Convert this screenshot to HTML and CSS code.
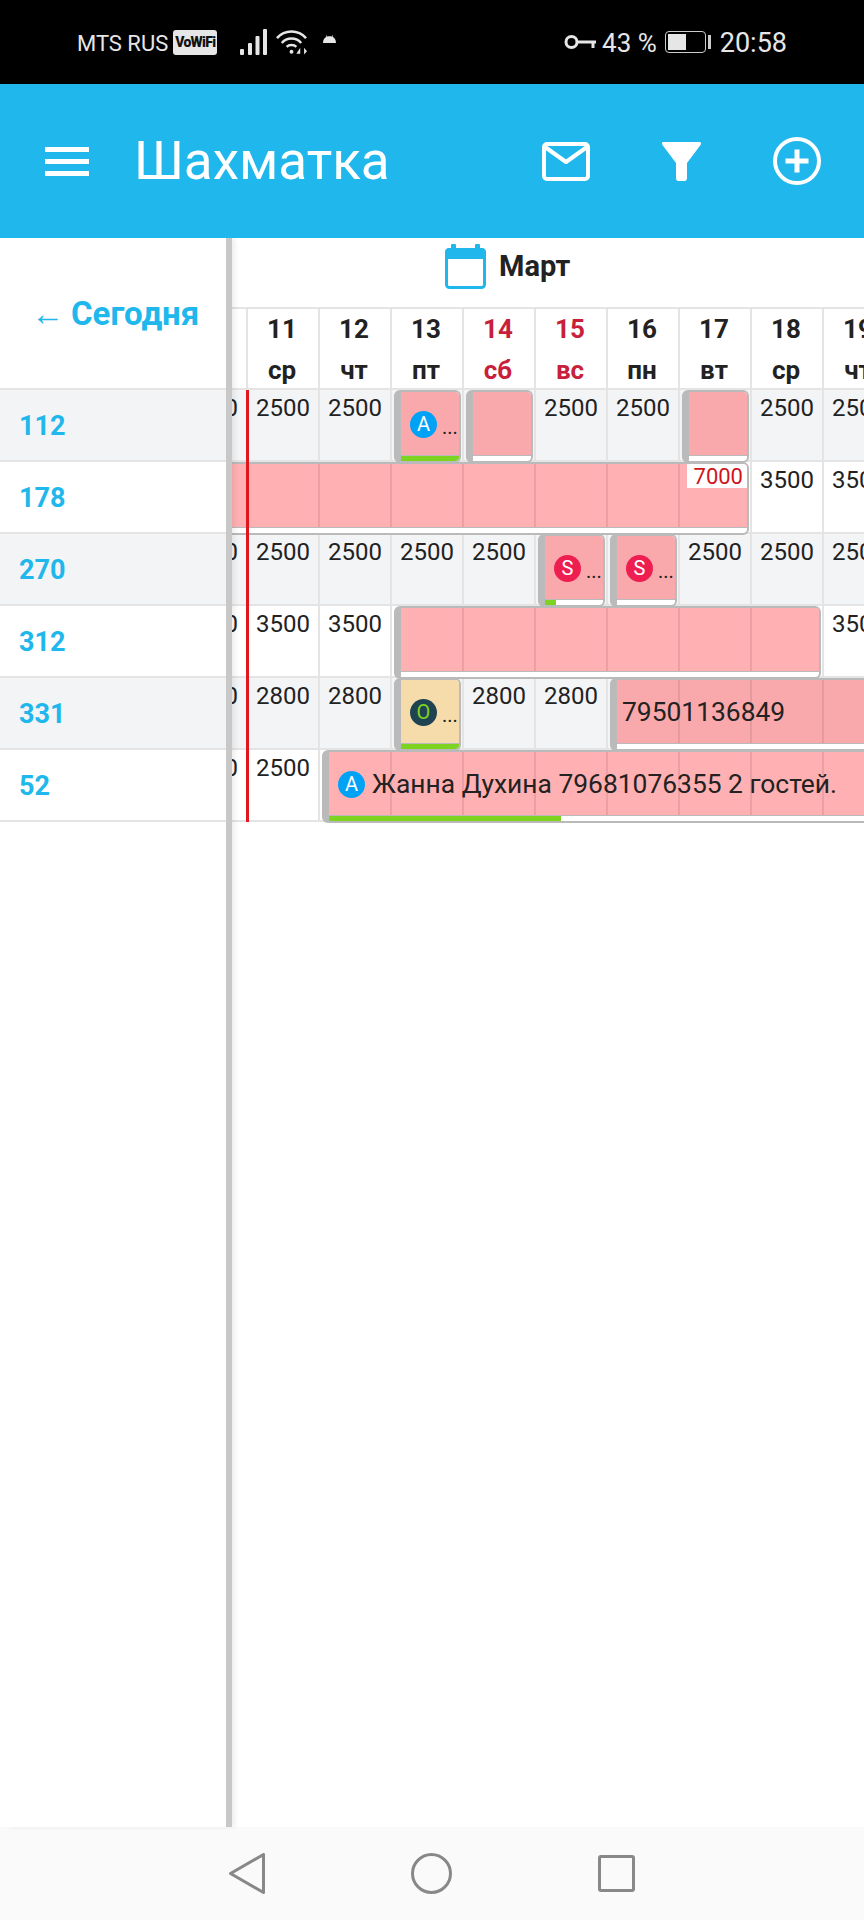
FILE: index.html
```html
<!DOCTYPE html>
<html lang="ru">
<head>
    <meta charset="UTF-8">
    <meta name="viewport" content="width=device-width, initial-scale=1.0">
    <title>Шахматка</title>
    <link rel="stylesheet" href="styles.css">
</head>
<body>
    <!-- Status bar -->
    <div class="status-bar">
        <div class="status-left">
            <span class="carrier">MTS RUS</span>
            <span class="vowifi">VoWiFi</span>
            <svg class="signal" width="27" height="26" viewBox="0 0 27 26" fill="#e6e6e6">
                <rect x="0" y="20" width="4" height="6" rx="1"/>
                <rect x="8" y="14" width="4" height="12" rx="1"/>
                <rect x="15.500" y="7" width="4" height="19" rx="1"/>
                <rect x="23" y="0" width="4" height="26" rx="1"/>
            </svg>
            <svg class="wifi" width="31" height="26" viewBox="0 0 32 26" fill="none" stroke="#e6e6e6" stroke-width="2.6">
                <path d="M1 9C9 0 23 0 31 9"/>
                <path d="M6 14C11 8 21 8 26 14"/>
                <path d="M11 18C13.500 15.500 18.500 15.500 21 18"/>
                <circle cx="16" cy="23" r="2" fill="#e6e6e6" stroke="none"/>
                <path d="M25 19L21 25H25V19M29 19V26L32 22.500Z" fill="#e6e6e6" stroke="none"/>
            </svg>
            <svg class="android" width="13" height="8" viewBox="0 0 13 8" fill="#e6e6e6">
                <path d="M0 8C0 5 1.500 2.800 3.400 1.800L2.800 .5L3.400 .2L4.100 1.500C5.500 1 7.500 1 8.900 1.500L9.600 .2L10.200 .5L9.600 1.800C11.500 2.800 13 5 13 8Z"/>
            </svg>
        </div>
        <div class="status-right">
            <svg width="32" height="16" viewBox="0 0 32 16" fill="none" stroke="#e6e6e6" stroke-width="3">
                <circle cx="7.500" cy="8" r="5.500"/>
                <path d="M13 8H32M29 8V14"/>
            </svg>
            <span class="battery-pct">43 %</span>
            <span class="battery"><span class="battery-level"></span></span>
            <span class="battery-tip"></span>
            <span class="clock">20:58</span>
        </div>
    </div>

    <!-- Header -->
    <header class="app-header">
        <div class="burger"><span></span><span></span><span></span></div>
        <h1 class="app-title">Шахматка</h1>
        <div class="header-actions">
            <svg width="48" height="39" viewBox="0 0 48 39" fill="none" stroke="#fff" stroke-width="4" stroke-linejoin="round">
                <rect x="2" y="2" width="44" height="35" rx="3"/>
                <path d="M3 5L24 20L45 5"/>
            </svg>
            <svg width="39" height="39" viewBox="0 0 39 39" fill="#fff">
                <path d="M1.500 0H37.500C39 0 39.500 1.500 38.500 3L25 21V36C25 38 24 39 22.500 39H16.500C15 39 14 38 14 36V21L.5 3C-.5 1.500 0 0 1.500 0Z"/>
            </svg>
            <svg width="48" height="48" viewBox="0 0 48 48" fill="none" stroke="#fff">
                <circle cx="24" cy="24" r="22" stroke-width="4"/>
                <path d="M24 12.500V35.500M12.500 24H35.500" stroke-width="5"/>
            </svg>
        </div>
    </header>

    <main class="board">
        <!-- Rooms column -->
        <aside class="rooms">
            <div class="today"><span class="arrow">←</span> Сегодня</div>
            <div class="room alt">112</div>
            <div class="room">178</div>
            <div class="room alt">270</div>
            <div class="room">312</div>
            <div class="room alt">331</div>
            <div class="room">52</div>
        </aside>

        <!-- Calendar -->
        <section class="calendar">
            <div class="month">
                <svg width="41" height="45" viewBox="0 0 41 45" fill="none">
                    <rect x="1.500" y="5.500" width="38" height="38" rx="3" fill="#fff" stroke="#20b7ec" stroke-width="3"/>
                    <path d="M1.500 8.500C1.500 6.500 2.500 5.500 4.500 5.500H36.500C38.500 5.500 39.500 6.500 39.500 8.500V13.500H1.500Z" fill="#20b7ec" stroke="#20b7ec" stroke-width="3"/>
                    <rect x="6" y="0" width="5" height="8" rx="1" fill="#20b7ec"/>
                    <rect x="30" y="0" width="5" height="8" rx="1" fill="#20b7ec"/>
                </svg>
                <span>Март</span>
            </div>
            <div class="grid">
                <div class="day"></div>
                <div class="day">11<small>ср</small></div>
                <div class="day">12<small>чт</small></div>
                <div class="day">13<small>пт</small></div>
                <div class="day weekend">14<small>сб</small></div>
                <div class="day weekend">15<small>вс</small></div>
                <div class="day">16<small>пн</small></div>
                <div class="day">17<small>вт</small></div>
                <div class="day">18<small>ср</small></div>
                <div class="day">19<small>чт</small></div>

                <!-- 112 -->
                <div class="cell alt">2500</div><div class="cell alt">2500</div><div class="cell alt">2500</div>
                <div class="cell alt"></div><div class="cell alt"></div><div class="cell alt">2500</div>
                <div class="cell alt">2500</div><div class="cell alt"></div><div class="cell alt">2500</div><div class="cell alt">2500</div>
                <!-- 178 -->
                <div class="cell"></div><div class="cell"></div><div class="cell"></div>
                <div class="cell"></div><div class="cell"></div><div class="cell"></div>
                <div class="cell"></div><div class="cell"></div><div class="cell">3500</div><div class="cell">3500</div>
                <!-- 270 -->
                <div class="cell alt">2500</div><div class="cell alt">2500</div><div class="cell alt">2500</div>
                <div class="cell alt">2500</div><div class="cell alt">2500</div><div class="cell alt"></div>
                <div class="cell alt"></div><div class="cell alt">2500</div><div class="cell alt">2500</div><div class="cell alt">2500</div>
                <!-- 312 -->
                <div class="cell">3500</div><div class="cell">3500</div><div class="cell">3500</div>
                <div class="cell"></div><div class="cell"></div><div class="cell"></div>
                <div class="cell"></div><div class="cell"></div><div class="cell"></div><div class="cell">3500</div>
                <!-- 331 -->
                <div class="cell alt">2800</div><div class="cell alt">2800</div><div class="cell alt">2800</div>
                <div class="cell alt"></div><div class="cell alt">2800</div><div class="cell alt">2800</div>
                <div class="cell alt"></div><div class="cell alt"></div><div class="cell alt"></div><div class="cell alt"></div>
                <!-- 52 -->
                <div class="cell">2500</div><div class="cell">2500</div><div class="cell"></div>
                <div class="cell"></div><div class="cell"></div><div class="cell"></div>
                <div class="cell"></div><div class="cell"></div><div class="cell"></div><div class="cell"></div>

                <!-- Bookings lie over the price cells -->
                <div class="bookings">
                    <div class="booking" style="--col:4;--row:1;--span:1;--paid:100%">
                        <span class="source src-a">A</span><span class="more">...</span>
                    </div>
                    <div class="booking" style="--col:5;--row:1;--span:1;--paid:0"></div>
                    <div class="booking" style="--col:8;--row:1;--span:1;--paid:0"></div>
                    <div class="booking open-left striped" style="--col:1;--row:2;--span:8;--paid:0">
                        <span class="price">7000</span>
                    </div>
                    <div class="booking" style="--col:6;--row:3;--span:1;--paid:19%">
                        <span class="source src-s">S</span><span class="more">...</span>
                    </div>
                    <div class="booking" style="--col:7;--row:3;--span:1;--paid:0">
                        <span class="source src-s">S</span><span class="more">...</span>
                    </div>
                    <div class="booking striped" style="--col:4;--row:4;--span:6;--paid:0"></div>
                    <div class="booking sand" style="--col:4;--row:5;--span:1;--paid:100%">
                        <span class="source src-o">O</span><span class="more">...</span>
                    </div>
                    <div class="booking open-right striped dark" style="--col:7;--row:5;--span:4;--paid:0">
                        <span class="guest">79501136849</span>
                    </div>
                    <div class="booking open-right striped" style="--col:3;--row:6;--span:8;--paid:232px">
                        <span class="source src-a">A</span><span class="guest">Жанна Духина 79681076355 2 гостей.</span>
                    </div>
                </div>
                <div class="now"></div>
            </div>
        </section>
    </main>

    <!-- Android nav -->
    <nav class="nav-bar">
        <svg width="36" height="41" viewBox="0 0 36 41" fill="none" stroke="#888" stroke-width="3" stroke-linejoin="round">
            <path d="M34.500 1.500V39.500L1.500 20.500Z"/>
        </svg>
        <svg width="41" height="41" viewBox="0 0 41 41" fill="none" stroke="#888" stroke-width="3">
            <circle cx="20.500" cy="20.500" r="19"/>
        </svg>
        <svg width="37" height="37" viewBox="0 0 37 37" fill="none" stroke="#888" stroke-width="3" stroke-linejoin="round">
            <rect x="1.500" y="1.500" width="34" height="34" rx="1.500"/>
        </svg>
    </nav>
</body>
</html>
```

FILE: styles.css
```css
* { margin: 0; padding: 0; box-sizing: border-box; }

body {
    width: 864px;
    height: 1920px;
    display: flex;
    flex-direction: column;
    overflow: hidden;
    background-color: #fff;
    color: #222;
    font-family: Roboto, 'Liberation Sans', sans-serif;
}

/* Status bar */
.status-bar {
    height: 84px;
    flex: none;
    background-color: #000;
    color: #e6e6e6;
    display: flex;
    justify-content: space-between;
    align-items: center;
    padding: 0 77px;
    font-size: 22px;
}

.status-left, .status-right {
    display: flex;
    align-items: center;
}

.carrier { padding-top: 2px; }

.vowifi {
    margin-left: 5px;
    width: 44px;
    height: 25px;
    line-height: 25px;
    text-align: center;
    border-radius: 3px;
    background-color: #e6e6e6;
    color: #111;
    font-size: 14px;
    font-weight: 900;
    letter-spacing: -0.7px;
    white-space: nowrap;
}

.signal { margin-left: 23px; }
.wifi { margin-left: 9px; }
.android { margin-left: 16px; margin-top: -6px; }

.status-right svg { margin-right: 6px; }

.battery-pct {
    padding-top: 2px;
    font-size: 26px;
    margin-right: 8px;
}

.battery {
    width: 41px;
    height: 22px;
    border: 1.5px solid #ccc;
    border-radius: 4px;
    padding: 2px;
}

.battery-level {
    display: block;
    width: 18px;
    height: 100%;
    background-color: #e6e6e6;
}

.battery-tip {
    width: 3px;
    height: 14px;
    margin-left: 2px;
    background-color: #ccc;
}

.clock {
    padding-top: 2px;
    font-size: 27px;
    margin-left: 9px;
}

/* Header */
.app-header {
    height: 154px;
    flex: none;
    background-color: #20b7ec;
    color: #fff;
    display: flex;
    align-items: center;
    padding: 0 43px 0 45px;
    position: relative;
    z-index: 3;
}

.burger {
    width: 44px;
    display: flex;
    flex-direction: column;
    gap: 7px;
}

.burger span {
    height: 5px;
    background-color: #fff;
}

.app-title {
    margin-left: 45px;
    font-size: 53px;
    font-weight: 400;
}

.header-actions {
    margin-left: auto;
    display: flex;
    align-items: center;
    gap: 72px;
}

/* Board */
.board {
    flex: 1;
    display: flex;
    min-height: 0;
}

.rooms {
    width: 226px;
    flex: none;
    box-shadow: 6px 0 0 #c8c8c8, 9px 0 5px rgba(0, 0, 0, 0.07);
    position: relative;
    z-index: 2;
    background-color: #fff;
}

.today {
    height: 152px;
    padding-left: 31px;
    display: flex;
    align-items: center;
    gap: 7px;
    font-size: 33px;
    font-weight: 700;
    color: #20b7ec;
    white-space: nowrap;
    border-bottom: 2px solid #e4e4e4;
}

.arrow { font-weight: 400; }

.room {
    height: 72px;
    padding: 2px 0 0 19px;
    display: flex;
    align-items: center;
    font-size: 27px;
    font-weight: 700;
    color: #20b7ec;
    border-bottom: 2px solid #e4e4e4;
}

.room.alt { background-color: #f3f4f6; }

.calendar {
    flex: 1;
    min-width: 0;
    overflow: hidden;
}

.month {
    height: 69px;
    display: flex;
    align-items: center;
    gap: 13px;
    font-size: 29px;
    font-weight: 700;
    padding: 0 0 13px 219px;
}

.grid {
    display: grid;
    position: relative;
    grid-template-columns: repeat(10, 72px);
    grid-template-rows: 83px repeat(6, 72px);
    margin-left: -50px;
    width: 720px;
}

.day {
    border-top: 2px solid #e4e4e4;
    border-right: 2px solid #e4e4e4;
    border-bottom: 2px solid #e4e4e4;
    padding: 1px 2px 0 0;
    text-align: center;
    font-size: 26px;
    font-weight: 700;
    line-height: 38px;
}

.day small {
    display: block;
    margin-top: 3px;
    font-size: 26px;
}

.day.weekend { color: #c81f3a; }

.cell {
    border-right: 2px solid #e4e4e4;
    border-bottom: 2px solid #e4e4e4;
    text-align: center;
    font-size: 24px;
    line-height: 30px;
    padding-top: 3px;
    background-color: #fff;
}

.cell.alt { background-color: #f3f4f6; }

.bookings {
    position: absolute;
    top: 83px;
    left: 0;
    display: grid;
    grid-template-columns: repeat(10, 72px);
    grid-template-rows: repeat(6, 72px);
}

.booking {
    grid-column: var(--col) / span var(--span);
    grid-row: var(--row);
    z-index: 0;
    margin: 0 3px -1px 2px;
    border: 2px solid #bababa;
    border-left-width: 7px;
    border-radius: 6px;
    background-color: #fff;
    position: relative;
    overflow: hidden;
    display: flex;
    align-items: center;
    padding: 0 0 5px 9px;
    font-size: 26.4px;
    white-space: nowrap;
    --pink: #f9a8ab;
    --line: #e59a9e;
}

.booking::before {
    content: "";
    position: absolute;
    inset: 0 0 5px 0;
    background-color: var(--pink);
    border-bottom: 1.5px solid #bababa;
    z-index: -1;
}

.booking::after {
    content: "";
    position: absolute;
    left: 0;
    bottom: 0;
    height: 5px;
    width: var(--paid);
    background-color: #7ed321;
}

/* cell lines under a long booking, tile starts at the column start */
.booking.striped { --pink: #ffb0b2; --line: #eaa0a4; }
.booking.dark { --pink: #f9a8ab; --line: #e59a9e; }

.booking.striped::before {
    background-image: linear-gradient(to right, var(--pink) 70px, var(--line) 70px);
    background-size: 72px 100%;
    background-position: -9px 0;
}

.booking.sand { --pink: #f6dcaa; }

.booking.open-left {
    margin-left: 0;
    border-left: 0;
    border-radius: 0 6px 6px 0;
}

.booking.open-left::before { background-position: 0 0; }

.booking.open-right {
    margin-right: 0;
    border-right: 0;
    border-radius: 6px 0 0 6px;
}

.source {
    width: 27px;
    height: 27px;
    flex: none;
    border-radius: 50%;
    display: flex;
    align-items: center;
    justify-content: center;
    font-size: 20px;
    color: #fff;
}

.src-a { background-color: #00a2f5; }
.src-s { background-color: #ee1f50; }
.src-o { background-color: #1f4350; color: #7ed321; }

.more {
    margin: 6px 0 0 5px;
    font-size: 20px;
}

.guest { margin-left: 7px; }
.dark { padding-left: 0; }
.dark .guest { margin-left: 5px; }

.price {
    position: absolute;
    top: 0;
    right: 0;
    padding: 0 4px 0 7px;
    height: 24px;
    line-height: 26px;
    background-color: #fff;
    color: #d0141c;
    font-size: 22px;
}

.now {
    position: absolute;
    left: 70px;
    top: 83px;
    bottom: 0;
    width: 3px;
    background-color: #e0161e;
    z-index: 2;
}

/* Android nav */
.nav-bar {
    height: 93px;
    flex: none;
    background-color: #fafafa;
    display: flex;
    align-items: center;
    gap: 146px;
    padding-left: 229px;
}
```
